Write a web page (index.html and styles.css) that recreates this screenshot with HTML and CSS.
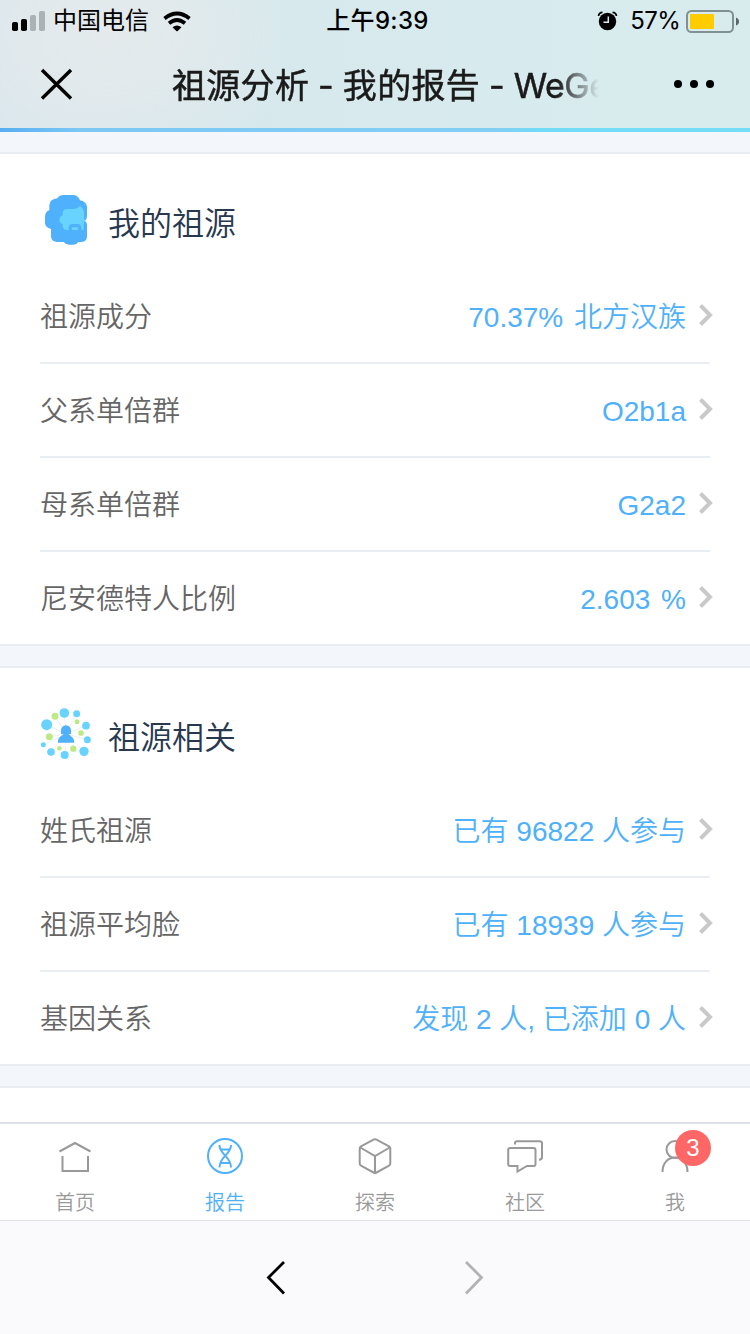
FILE: index.html
```html
<!DOCTYPE html>
<html lang="zh-CN">
<head>
    <meta charset="UTF-8">
    <meta name="viewport" content="width=device-width, initial-scale=1.0">
    <title>祖源分析 - 我的报告 - WeGene</title>
    <link rel="stylesheet" href="styles.css">
</head>
<body>
    <header class="header">
        <div class="status">
            <div class="status-left">
                <svg class="signal" viewBox="12 10 34 20">
                    <rect x="12" y="21" width="6" height="9" rx="1.8"/>
                    <rect x="21" y="18" width="6" height="12" rx="1.8"/>
                    <rect x="30" y="14" width="6" height="16" rx="1.8" fill="#a9b3b5"/>
                    <rect x="39" y="10" width="6" height="20" rx="1.8" fill="#a9b3b5"/>
                </svg>
                <span class="carrier">中国电信</span>
                <svg class="wifi" viewBox="163 9 28 21">
                    <path d="M164.5 16.5Q177 6.5 189.500 16.500" fill="none" stroke="#000" stroke-width="3.700"/>
                    <path d="M169 21.300Q177 14.700 185 21.300" fill="none" stroke="#000" stroke-width="3.700"/>
                    <path d="M172.500 25.200Q177 21.800 181.500 25.200L177.700 29Q177 29.700 176.300 29Z"/>
                </svg>
            </div>
            <div class="time">上午9:39</div>
            <div class="status-right">
                <svg class="alarm" viewBox="598 10 21 20">
                    <circle cx="608.5" cy="20.500" r="8.700"/>
                    <path d="M599.500 15Q600 11.500 603.500 11.300M613.500 11.300Q617 11.500 617.500 15" fill="none" stroke="#000" stroke-width="1.700"/>
                    <path d="M609.300 15.500V21.300H604.500" fill="none" stroke="#d8ebee" stroke-width="1.500"/>
                </svg>
                <span class="percent">57%</span>
                <svg class="battery" viewBox="686 9 53 23">
                    <rect x="687" y="10" width="46" height="21" rx="4.500" fill="none" stroke="#819092" stroke-width="2"/>
                    <rect x="690" y="13" width="24" height="15" fill="#fc0"/>
                    <path d="M736 16.500Q739 17.500 739 20.500T736 24.500Z" fill="#5c6769"/>
                </svg>
            </div>
        </div>
        <div class="nav">
            <svg class="close" viewBox="40 68 33 33">
                <path d="M42 70L71 98.500M71 70L42 98.500" fill="none" stroke="#000" stroke-width="3.400"/>
            </svg>
            <h1 class="page-title">祖源分析 - 我的报告 - <span class="brand">WeGe</span></h1>
            <svg class="more" viewBox="673 79 42 10">
                <circle cx="678" cy="84" r="4"/>
                <circle cx="694" cy="84" r="4"/>
                <circle cx="710" cy="84" r="4"/>
            </svg>
        </div>
    </header>

    <main class="content">
        <section class="card">
            <div class="card-head">
                <svg class="card-icon" viewBox="30 42 156 156">
                    <path d="M58 75Q60 57 82 55Q88 45 102 45H132Q145 47 150 61Q169 64 171 82V108Q171 117 165 122Q171 127 171 136V170Q170 184 155 186H145Q140 195 128 194H116Q106 193 101 186H80Q63 184 63 168V147Q46 143 45 129V109Q46 95 58 91Z" fill="#4fb0fb"/>
                    <path d="M110 87H132Q142 87 150 78Q162 86 162 99V113Q162 118 165 122Q161 127 161 134V150H154V142Q153 133 144 132H127Q117 132 116 144V150H109Q99 149 98 139V132Q88 129 88 119Q89 109 98 106V98Q100 88 110 87Z" fill="#69d3ff"/>
                    <rect x="125" y="142" width="20" height="8" rx="4" fill="#69d3ff"/>
                </svg>
                <h2>我的祖源</h2>
            </div>
            <a class="row"><span class="label">祖源成分</span><span class="value ratio">70.37% 北方汉族</span><svg class="arrow" viewBox="0 0 14 22"><path d="M1.500 1.500L11 11L1.500 20.500"/></svg></a>
            <a class="row"><span class="label">父系单倍群</span><span class="value">O2b1a</span><svg class="arrow" viewBox="0 0 14 22"><path d="M1.500 1.500L11 11L1.500 20.500"/></svg></a>
            <a class="row"><span class="label">母系单倍群</span><span class="value">G2a2</span><svg class="arrow" viewBox="0 0 14 22"><path d="M1.500 1.500L11 11L1.500 20.500"/></svg></a>
            <a class="row"><span class="label">尼安德特人比例</span><span class="value ratio">2.603 %</span><svg class="arrow" viewBox="0 0 14 22"><path d="M1.500 1.500L11 11L1.500 20.500"/></svg></a>
        </section>

        <section class="card">
            <div class="card-head">
                <svg class="card-icon" viewBox="30 39 156 156">
                    <path d="M108 117L50 89M108 117L75 64M108 117L103 54M108 117L140 56M108 117L168 92M108 117L172 134M108 117L162 169M108 117L104 180M108 117L63 171M108 117L40 149M108 117L58 125" stroke="#e3e6e8" stroke-width="2"/>
                    <g fill="#69d3ff">
                        <circle cx="50" cy="89" r="16.500"/>
                        <circle cx="103" cy="54" r="14.500"/>
                        <circle cx="140" cy="56" r="10.500"/>
                        <circle cx="168" cy="92" r="11.500"/>
                        <circle cx="172" cy="134" r="10.500"/>
                        <circle cx="162" cy="169" r="14"/>
                        <circle cx="104" cy="180" r="12"/>
                        <circle cx="63" cy="171" r="11.500"/>
                        <circle cx="40" cy="149" r="7.500"/>
                    </g>
                    <g fill="#bde986">
                        <circle cx="75" cy="64" r="10.500"/>
                        <circle cx="141" cy="80" r="7.500"/>
                        <circle cx="153" cy="114" r="8.500"/>
                        <circle cx="130" cy="161" r="9.500"/>
                        <circle cx="88" cy="160" r="7"/>
                        <circle cx="58" cy="125" r="10.500"/>
                    </g>
                    <path d="M93 117V106Q94 92 108 91Q122 92 123 106V117Z" fill="#4fb0fb"/>
                    <path d="M84 143V136Q86 127 101 117H115Q130 127 132 136V143Z" fill="#4fb0fb"/>
                </svg>
                <h2>祖源相关</h2>
            </div>
            <a class="row"><span class="label">姓氏祖源</span><span class="value">已有 96822 人参与</span><svg class="arrow" viewBox="0 0 14 22"><path d="M1.500 1.500L11 11L1.500 20.500"/></svg></a>
            <a class="row"><span class="label">祖源平均脸</span><span class="value">已有 18939 人参与</span><svg class="arrow" viewBox="0 0 14 22"><path d="M1.500 1.500L11 11L1.500 20.500"/></svg></a>
            <a class="row"><span class="label">基因关系</span><span class="value">发现 2 人, 已添加 0 人</span><svg class="arrow" viewBox="0 0 14 22"><path d="M1.500 1.500L11 11L1.500 20.500"/></svg></a>
        </section>

        <section class="card card-next"></section>
    </main>

    <nav class="tabs">
        <a class="tab">
            <svg class="tab-icon" viewBox="55 1136 40 40">
                <path d="M59.500 1151.500L75 1143L90.500 1151.500M62.500 1156V1171H88V1156"/>
            </svg>
            <span>首页</span>
        </a>
        <a class="tab active">
            <svg class="tab-icon" viewBox="205 1136 40 40">
                <circle cx="225" cy="1156" r="17"/>
                <path d="M219.500 1145C219.500 1155 231 1156 231 1167.500M231 1145C231 1155 219.500 1156 219.500 1167.500M220 1149.500H230M221 1163H229.500"/>
            </svg>
            <span>报告</span>
        </a>
        <a class="tab">
            <svg class="tab-icon" viewBox="355 1136 40 40">
                <path d="M373.500 1139.600Q375 1138.800 376.500 1139.600L389 1146.300Q390.300 1147 390.300 1148.500V1163.500Q390.300 1165 389 1165.700L376.500 1172.500Q375 1173.300 373.500 1172.500L361 1165.700Q359.700 1165 359.700 1163.500V1148.500Q359.700 1147 361 1146.300ZM360.300 1147.500L375 1156L389.700 1147.500M375 1156V1172.500"/>
            </svg>
            <span>探索</span>
        </a>
        <a class="tab">
            <svg class="tab-icon" viewBox="505 1136 40 40">
                <path d="M510.500 1148H533.500Q535.500 1148 535.500 1150V1164Q535.500 1166 533.500 1166H527L517.500 1171.500V1166H510.500Q508.200 1166 508.200 1164V1150Q508.200 1148 510.500 1148ZM515 1144.500V1143Q515 1141.200 517 1141.200H539.800Q542 1141.200 542 1143.200V1157.500Q542 1159.500 539 1159.700"/>
            </svg>
            <span>社区</span>
        </a>
        <a class="tab">
            <svg class="tab-icon" viewBox="655 1136 40 40">
                <circle cx="675" cy="1149.500" r="8.500"/>
                <path d="M662.500 1172C662.500 1163 668 1157.500 675 1157.500S687.500 1163 687.500 1172"/>
            </svg>
            <span>我</span>
            <b class="badge">3</b>
        </a>
    </nav>

    <footer class="browser-bar">
        <svg viewBox="0 0 20 36"><path d="M18 2L2.500 17.500L18 33.500" stroke="#000"/></svg>
        <svg viewBox="0 0 20 36"><path d="M2 2L17.500 17.500L2 33.500" stroke="#b2b2b4"/></svg>
    </footer>
</body>
</html>
```

FILE: styles.css
```css
* {
    box-sizing: border-box;
    margin: 0;
    padding: 0;
}

body {
    width: 750px;
    height: 1334px;
    display: flex;
    flex-direction: column;
    overflow: hidden;
    font-family: "Liberation Sans", "Noto Sans CJK SC", sans-serif;
    background-color: #f3f6fa;
}

svg {
    display: block;
    flex: none;
}

/* header */
.header {
    height: 132px;
    background: radial-gradient(ellipse 190px 150px at 105px 35px, #e4eaec 0, rgba(228, 234, 236, 0.85) 35%, rgba(228, 234, 236, 0) 100%), linear-gradient(90deg, #d8e6ee, #d7e9ed 300px, #d8ecee);
    border-bottom: 4px solid;
    border-image: linear-gradient(90deg, #55aef2, #7cc8f5 80px, #82cff6 500px, #70dcf6 540px, #73dff6) 1;
}

.status {
    height: 40px;
    display: grid;
    grid-template-columns: 1fr auto 1fr;
    align-items: center;
    padding: 0 11px 0 12px;
    font-family: Inter, "Noto Sans CJK SC", sans-serif;
    font-size: 24px;
    line-height: 42px;
}

.status-left,
.status-right {
    height: 40px;
    display: flex;
    align-items: center;
}

.status-right {
    justify-content: flex-end;
}

.signal {
    width: 34px;
    height: 20px;
}

.carrier {
    margin: 0 14px 0 7px;
}

.wifi {
    width: 28px;
    height: 21px;
}

.time {
    padding: 0 0 0 4px;
    font-weight: 500;
    letter-spacing: 0.3px;
}

.alarm {
    width: 21px;
    height: 20px;
}

.percent {
    margin: 0 6px 0 12px;
    letter-spacing: -0.7px;
}

.battery {
    width: 53px;
    height: 23px;
}

.nav {
    height: 88px;
    display: flex;
    align-items: center;
    padding: 0 35px 0 40px;
}

.close {
    width: 33px;
    height: 33px;
}

.page-title {
    width: 430px;
    margin: -2px auto 0 99px;
    white-space: nowrap;
    font-family: Inter, "Noto Sans CJK SC", sans-serif;
    font-size: 34px;
    font-weight: 400;
    letter-spacing: 0.3px;
    word-spacing: -1px;
    color: #1a1a1a;
    -webkit-text-stroke: 0.5px #1a1a1a;
    -webkit-mask-image: linear-gradient(90deg, #000 385px, transparent 427px);
    mask-image: linear-gradient(90deg, #000 385px, transparent 427px);
}

.brand {
    letter-spacing: -0.5px;
}

.more {
    width: 42px;
    height: 10px;
}

/* report cards */
.content {
    flex: 1;
    padding-top: 20px;
    overflow: hidden;
}

.card {
    margin-bottom: 20px;
    background-color: #fff;
    border-top: 2px solid #e9edf1;
    border-bottom: 2px solid #e9edf1;
}

.card-next {
    height: 100px;
}

.card-head {
    height: 116px;
    display: flex;
    align-items: center;
    gap: 16px;
    padding: 16px 40px 0;
}

.card-icon {
    width: 52px;
    height: 52px;
}

.card-head h2 {
    padding-top: 2px;
    font-size: 32px;
    font-weight: 350;
    color: #27384f;
}

.row {
    height: 94px;
    display: flex;
    align-items: center;
    margin: 0 40px;
    padding-bottom: 2px;
    font-size: 28px;
    font-weight: 350;
    line-height: 40px;
    border-bottom: 2px solid #e9eef3;
}

.row:last-child {
    height: 92px;
    border-bottom: none;
}

.label {
    flex: 1;
    padding-top: 6px;
    color: #666;
}

.value {
    padding-top: 5px;
    color: #4fb0fb;
}

.ratio {
    word-spacing: 3px;
}

.arrow {
    width: 14px;
    height: 22px;
    margin: 0 -3px 0 13px;
}

.arrow path {
    fill: none;
    stroke: #c9c9c9;
    stroke-width: 4;
}

/* tabs */
.tabs {
    height: 98px;
    display: flex;
    background-color: #fff;
    border-top: 2px solid #dde2e8;
}

.tab {
    flex: 1;
    position: relative;
    display: flex;
    flex-direction: column;
    align-items: center;
    padding-top: 12px;
    font-size: 20px;
    font-weight: 350;
    line-height: 28px;
    color: #999;
}

.tab.active {
    color: #4fb0fb;
}

.tab-icon {
    width: 40px;
    height: 40px;
    margin-bottom: 13px;
    fill: none;
    stroke: currentColor;
    stroke-width: 2;
}

.badge {
    position: absolute;
    top: 6px;
    left: 75px;
    width: 36px;
    height: 36px;
    border-radius: 50%;
    font-size: 24px;
    font-weight: normal;
    line-height: 36px;
    text-align: center;
    color: #fff;
    background-color: #ff6666;
}

.browser-bar {
    height: 114px;
    display: flex;
    justify-content: center;
    align-items: center;
    gap: 178px;
    background-color: #fafafc;
    border-top: 1px solid #e2e2e4;
}

.browser-bar svg {
    width: 20px;
    height: 36px;
}

.browser-bar path {
    fill: none;
    stroke-width: 2.8;
}
```
